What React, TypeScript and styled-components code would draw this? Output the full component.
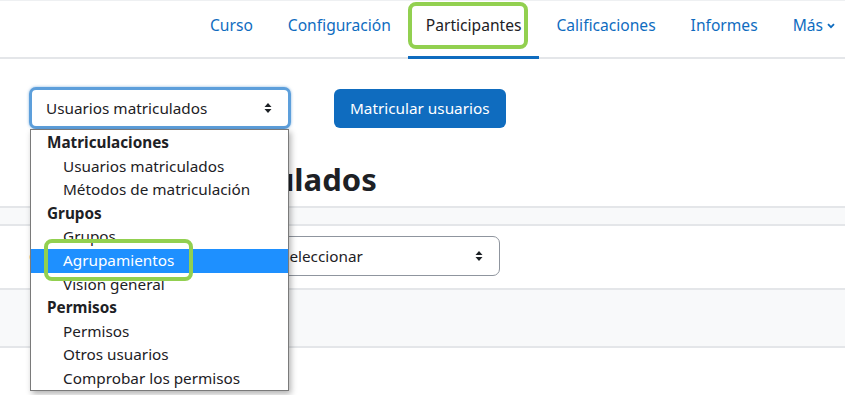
import React from "react";
import styled, { createGlobalStyle } from "styled-components";

const GlobalStyle = createGlobalStyle`
  html, body {
    margin: 0;
    padding: 0;
    background: #fff;
    font-family: "Noto Sans", "Open Sans", sans-serif;
    color: #1d2125;
  }
  * { box-sizing: border-box; }
`;

const tabs = ["Curso", "Configuración", "Participantes", "Calificaciones", "Informes"];

const menu: { label: string; group?: boolean; active?: boolean }[] = [
  { label: "Matriculaciones", group: true },
  { label: "Usuarios matriculados" },
  { label: "Métodos de matriculación" },
  { label: "Grupos", group: true },
  { label: "Grupos" },
  { label: "Agrupamientos", active: true },
  { label: "Visión general" },
  { label: "Permisos", group: true },
  { label: "Permisos" },
  { label: "Otros usuarios" },
  { label: "Comprobar los permisos" },
];

const Page = styled.div`
  position: relative;
  width: 845px;
  height: 395px;
  overflow: hidden;
  border-top: 1px solid #eef0f2;
`;

const Nav = styled.nav`
  display: flex;
  justify-content: flex-end;
  height: 58px;
  padding-right: 0;
  border-bottom: 2px solid #e4e6e9;
`;

const Tab = styled.div<{ $active?: boolean; $last?: boolean }>`
  display: flex;
  align-items: center;
  padding: 0 ${(p) => (p.$last ? 10 : 17.5)}px 7px 17.5px;
  font-size: 15.6px;
  color: ${(p) => (p.$active ? "#1d2125" : "#0f6cbf")};
  border-bottom: 3px solid ${(p) => (p.$active ? "#0f6cbf" : "transparent")};
  margin-bottom: -2px;
`;

const Chevron = styled.svg`
  margin-left: 4px;
  margin-top: 1px;
`;

const Content = styled.div`
  padding: 28px 0 0 29px;
`;

const TopRow = styled.div`
  display: flex;
  align-items: center;
  gap: 43px;
`;

const SelectBox = styled.div<{ $focus?: boolean; $width: number }>`
  display: flex;
  align-items: center;
  justify-content: space-between;
  width: ${(p) => p.$width}px;
  height: ${(p) => (p.$focus ? 42 : 40)}px;
  padding: 0 16px 0 ${(p) => (p.$focus ? 14 : 12)}px;
  font-size: 15.3px;
  color: #1d2125;
  background: #fff;
  border: ${(p) => (p.$focus ? "3px solid #5d9fdb" : "1px solid #8f959e")};
  border-radius: 7px;
  box-shadow: ${(p) => (p.$focus ? "0 0 3px rgba(15,108,191,0.5)" : "none")};
`;

const Arrows = () => (
  <svg width="8" height="12" viewBox="0 0 8 12">
    <path d="M4 1 L7.5 5 H0.5 Z M4 11 L7.5 7 H0.5 Z" fill="#1d2125" />
  </svg>
);

const PrimaryButton = styled.button`
  height: 39px;
  padding: 0 16px;
  font-family: inherit;
  font-size: 15.3px;
  color: #fff;
  background: #0f6cbf;
  border: none;
  border-radius: 6px;
`;

const Heading = styled.h2`
  margin: 30px 0 7px;
  font-size: 31px;
  font-weight: 700;
  line-height: 40px;
  color: #1d2125;
`;

const Band = styled.div<{ $h: number }>`
  height: ${(p) => p.$h}px;
  margin-left: -29px;
  background: #f8f9fa;
  border-top: 2px solid #e4e6e9;
  border-bottom: 2px solid #e4e6e9;
`;

const FilterRow = styled.div`
  display: flex;
  align-items: center;
  gap: 12px;
  height: 62px;
  padding-bottom: 2px;
  font-size: 15.3px;
`;

const FilterLabel = styled.span`
  width: 227px;
`;

const Dropdown = styled.ul`
  position: absolute;
  left: 30px;
  top: 128px;
  width: 259px;
  height: 262px;
  margin: 0;
  padding: 1px 0 0;
  list-style: none;
  background: #fff;
  border: 1px solid #7a7a7a;
  box-shadow: 2px 3px 6px rgba(0, 0, 0, 0.3);
`;

const Option = styled.li<{ $group?: boolean; $active?: boolean }>`
  height: 23.6px;
  line-height: 23.6px;
  padding-left: ${(p) => (p.$group ? 16 : 32)}px;
  font-size: 15.3px;
  font-weight: ${(p) => (p.$group ? 700 : 400)};
  color: ${(p) => (p.$active ? "#fff" : "#1d2125")};
  background: ${(p) => (p.$active ? "#1e90ff" : "transparent")};
  white-space: nowrap;
`;

const Highlight = styled.div<{ $x: number; $y: number; $w: number; $h: number }>`
  position: absolute;
  left: ${(p) => p.$x}px;
  top: ${(p) => p.$y}px;
  width: ${(p) => p.$w}px;
  height: ${(p) => p.$h}px;
  border: 4px solid #92d050;
  border-radius: 8px;
  pointer-events: none;
`;

export default function App() {
  return (
    <>
      <GlobalStyle />
      <Page>
        <Nav>
          {tabs.map((t) => (
            <Tab key={t} $active={t === "Participantes"}>
              {t}
            </Tab>
          ))}
          <Tab $last>
            Más
            <Chevron width="8" height="6" viewBox="0 0 8 6">
              <path d="M1 1.2 L4 4.2 L7 1.2" fill="none" stroke="#0f6cbf" strokeWidth="1.8" />
            </Chevron>
          </Tab>
        </Nav>
        <Content>
          <TopRow>
            <SelectBox $focus $width={262}>
              <span>Usuarios matriculados</span>
              <Arrows />
            </SelectBox>
            <PrimaryButton>Matricular usuarios</PrimaryButton>
          </TopRow>
          <Heading>Usuarios matriculados</Heading>
          <Band $h={20} />
          <FilterRow>
            <FilterLabel>Coincidencia</FilterLabel>
            <SelectBox $width={232}>
              <span>Seleccionar</span>
              <Arrows />
            </SelectBox>
          </FilterRow>
          <Band $h={60} />
        </Content>

        <Dropdown>
          {menu.map((m, i) => (
            <Option key={i} $group={m.group} $active={m.active}>
              {m.label}
            </Option>
          ))}
        </Dropdown>

        <Highlight $x={408} $y={1} $w={120} $h={47} />
        <Highlight $x={44} $y={238} $w={149} $h={42} />
      </Page>
    </>
  );
}
